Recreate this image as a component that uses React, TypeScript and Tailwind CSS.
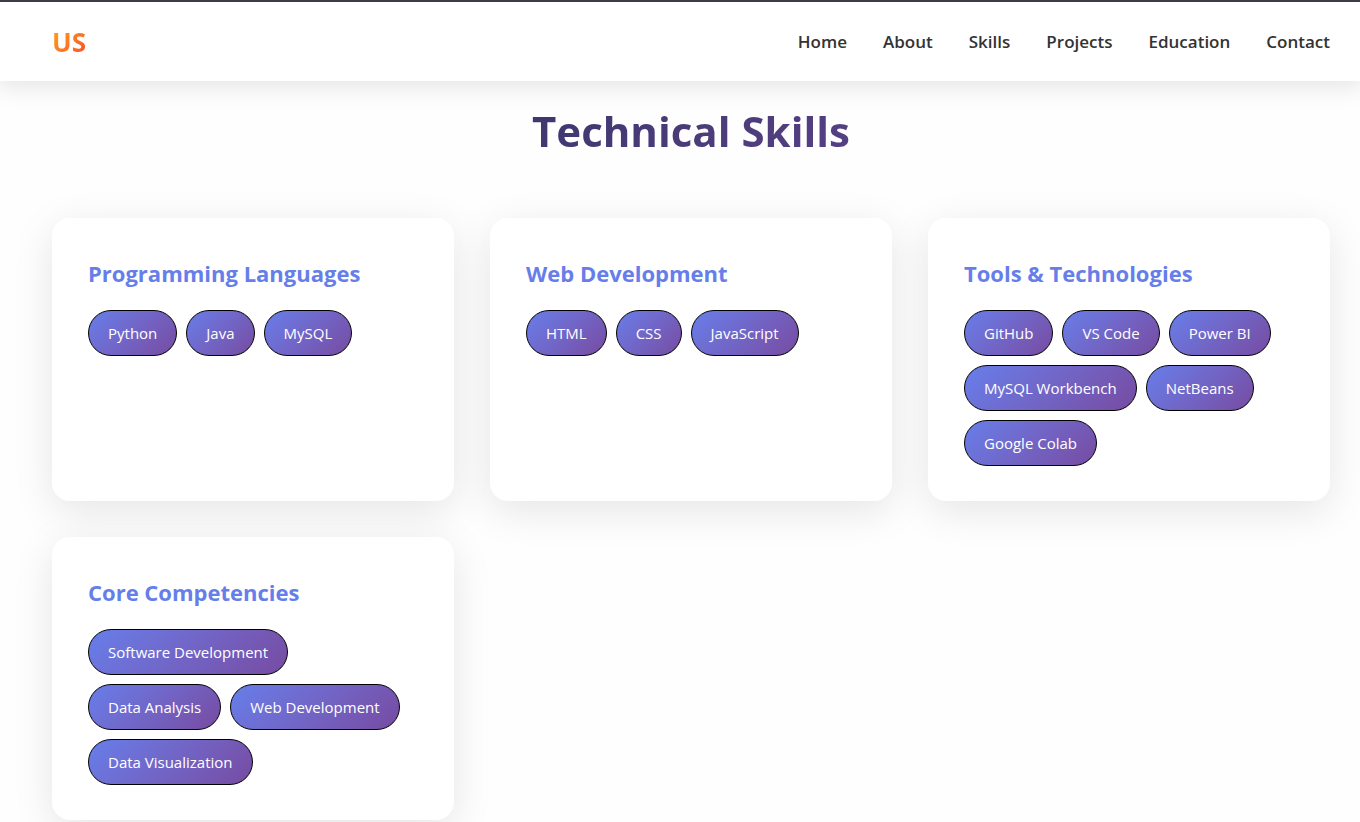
const links = ['Home', 'About', 'Skills', 'Projects', 'Education', 'Contact'];

const groups = [
  { title: 'Programming Languages', skills: ['Python', 'Java', 'MySQL'] },
  { title: 'Web Development', skills: ['HTML', 'CSS', 'JavaScript'] },
  {
    title: 'Tools & Technologies',
    skills: ['GitHub', 'VS Code', 'Power BI', 'MySQL Workbench', 'NetBeans', 'Google Colab'],
  },
  {
    title: 'Core Competencies',
    skills: ['Software Development', 'Data Analysis', 'Web Development', 'Data Visualization'],
  },
];

function Header() {
  return (
    <header className="relative border-t-2 border-[#3f3b48] bg-white shadow-[0_2px_24px_4px_rgba(0,0,0,0.1)]">
      <nav className="flex items-center justify-between pt-5 pr-[30px] pb-[19px] pl-[52px]">
        <a
          href="#home"
          className="bg-linear-135 from-[#ffaa06] to-[#f5402c] bg-clip-text text-[26px] leading-10 font-bold text-transparent"
        >
          US
        </a>
        <ul className="flex gap-9">
          {links.map((link) => (
            <li key={link}>
              <a href={`#${link.toLowerCase()}`} className="text-[17px] leading-10 font-semibold text-[#333333]">
                {link}
              </a>
            </li>
          ))}
        </ul>
      </nav>
    </header>
  );
}

function SkillCard({ title, skills }: { title: string; skills: string[] }) {
  return (
    <article className="rounded-[18px] bg-white px-9 pt-9 pb-[35px] shadow-[0_10px_40px_rgba(0,0,0,0.1)]">
      <h3 className="mb-[18px] text-[22px] leading-[38px] font-bold text-[#667eea]">{title}</h3>
      <ul className="flex flex-wrap gap-[9px]">
        {skills.map((skill) => (
          <li
            key={skill}
            className="rounded-full border border-black bg-linear-135 from-[#667eea] to-[#764ba2] px-[19px] py-2 text-[15px] leading-7 text-white"
          >
            {skill}
          </li>
        ))}
      </ul>
    </article>
  );
}

export default function App() {
  return (
    <div className="min-h-screen bg-[#fefefe] font-['Open_Sans','Noto_Sans',sans-serif]">
      <Header />
      <main id="skills" className="pt-[14px] pr-[30px] pl-[52px]">
        <h2 className="mb-[51px] bg-linear-135 from-[#1e2b52] to-[#764ba2] bg-clip-text text-center text-[42px] leading-[72px] font-bold text-transparent">
          Technical Skills
        </h2>
        <div className="grid grid-cols-1 gap-9 md:grid-cols-2 lg:grid-cols-3">
          {groups.map((group) => (
            <SkillCard key={group.title} {...group} />
          ))}
        </div>
      </main>
    </div>
  );
}
